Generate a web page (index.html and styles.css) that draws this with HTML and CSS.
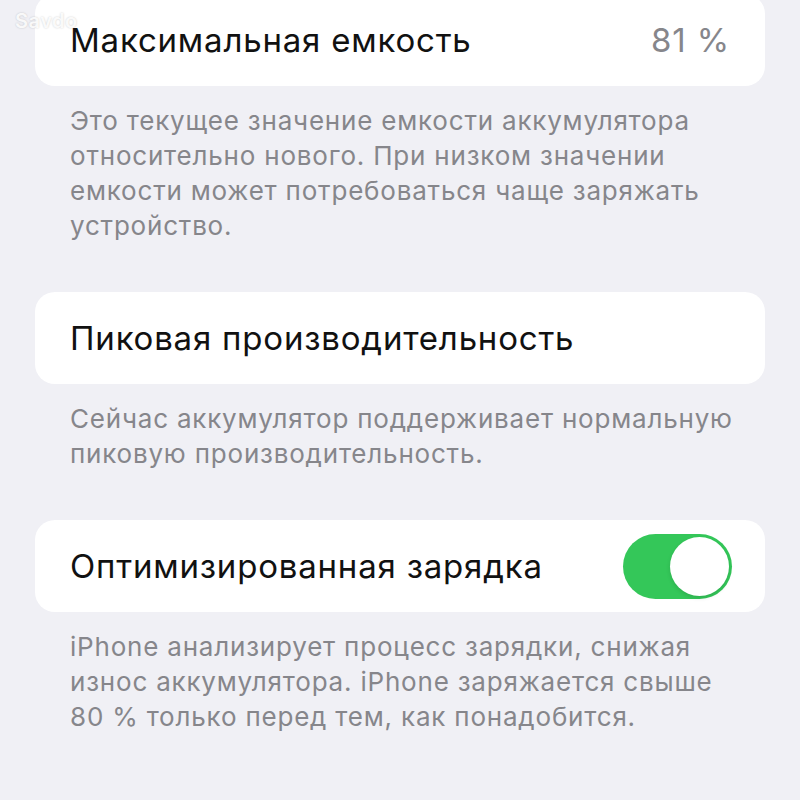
FILE: index.html
```html
<!DOCTYPE html>
<html lang="ru">
<head>
  <meta charset="UTF-8">
  <meta name="viewport" content="width=device-width, initial-scale=1">
  <title>Аккумулятор</title>
  <link rel="stylesheet" href="styles.css">
</head>
<body>

  <div class="watermark">Savdo</div>

  <div class="settings">
    <div class="group">
      <div class="cell">
        <span class="cell-title">Максимальная емкость</span>
        <span class="cell-value">81 %</span>
      </div>
      <p class="footer">Это текущее значение емкости аккумулятора относительно нового. При низком значении емкости может потребоваться чаще заряжать устройство.</p>
    </div>

    <div class="group">
      <div class="cell">
        <span class="cell-title">Пиковая производительность</span>
      </div>
      <p class="footer">Сейчас аккумулятор поддерживает нормальную пиковую производительность.</p>
    </div>

    <div class="group">
      <div class="cell">
        <span class="cell-title">Оптимизированная зарядка</span>
        <span class="switch on"><span class="knob"></span></span>
      </div>
      <p class="footer">iPhone анализирует процесс зарядки, снижая износ аккумулятора. iPhone заряжается свыше 80 % только перед тем, как понадобится.</p>
    </div>
  </div>

</body>
</html>
```

FILE: styles.css
```css
:root {
  --bg-color: #f0f0f5;
  --card-color: #ffffff;
  --text-color: #111111;
  --muted-color: #86868b;
  --green: #34c759;
}

* {
  box-sizing: border-box;
  margin: 0;
  padding: 0;
}

body {
  background-color: var(--bg-color);
  color: var(--text-color);
  font-family: 'Inter', 'Roboto', sans-serif;
  width: 800px;
  height: 800px;
  overflow: hidden;
  position: relative;
}

/* водяной знак поверх снимка */
.watermark {
  position: absolute;
  left: 15px;
  top: 11px;
  line-height: 20px;
  color: rgba(255, 255, 255, 0.9);
  font-size: 20px;
  font-weight: 600;
  letter-spacing: 0.5px;
  text-shadow: 0 0 2px rgba(0, 0, 0, 0.2);
  z-index: 2;
}

.settings {
  margin-top: -6px;
  padding: 0 35px;
}

.group {
  margin-bottom: 49px;
}

.cell {
  background-color: var(--card-color);
  border-radius: 20px;
  height: 92px;
  padding: 0 35px;
  display: flex;
  align-items: center;
  justify-content: space-between;
}

.cell-title {
  font-size: 33px;
  letter-spacing: 0.8px;
}

.cell-value {
  font-size: 33px;
  letter-spacing: 0.9px;
  color: var(--muted-color);
}

.footer {
  padding: 17px 15px 0 35px;
  font-size: 26px;
  letter-spacing: 0.8px;
  line-height: 35px;
  color: var(--muted-color);
}

.switch {
  width: 109px;
  height: 65px;
  border-radius: 33px;
  background: var(--green);
  display: flex;
  align-items: center;
  justify-content: flex-end;
  padding: 3px;
  margin-right: -2px;
}

.knob {
  width: 59px;
  height: 59px;
  border-radius: 50%;
  background: #fff;
  box-shadow: 0 2px 4px rgba(0, 0, 0, 0.12);
}
```
